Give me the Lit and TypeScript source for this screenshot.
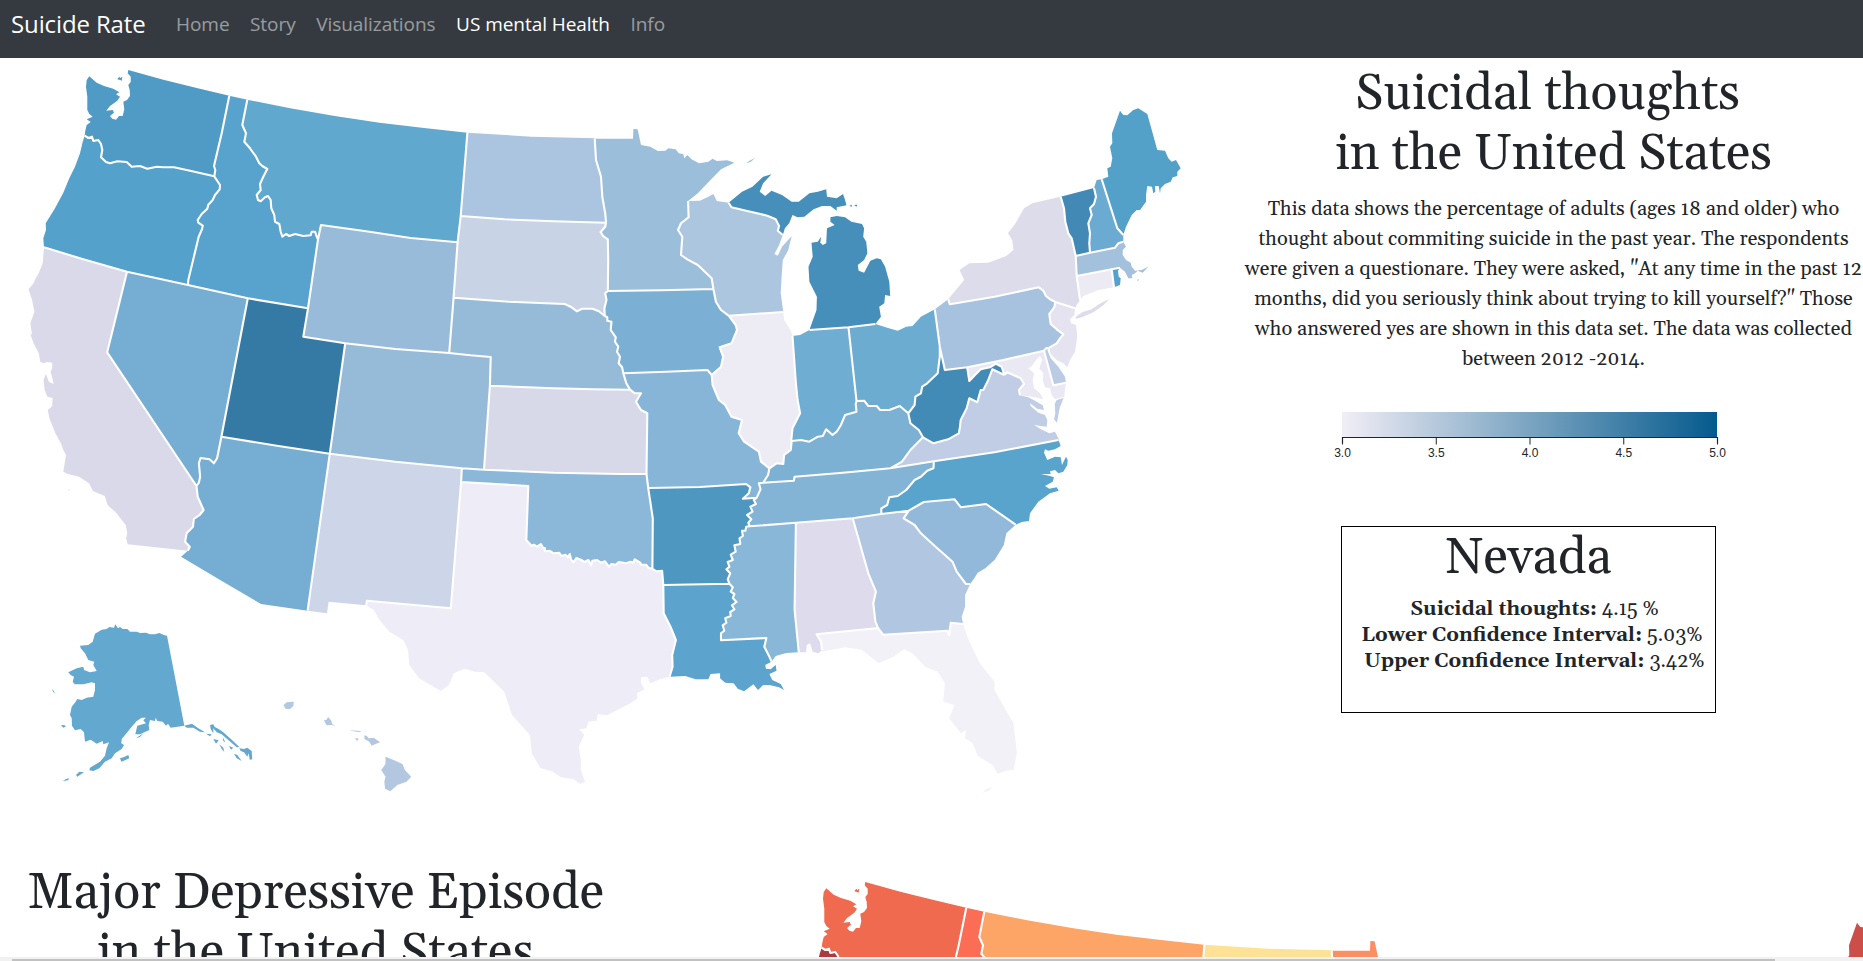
import { LitElement, html, css, svg } from "lit";
import { customElement, property } from "lit/decorators.js";

type Pt = [number, number];

// Survey sheets: each has an origin and a horizontal / vertical resolution.
const SHEETS: Record<string, [number, number, number, number]> = {
  A: [0, 0, 2.24, 3],
  B: [0, 300, 2.529, 3],
  C: [0, 600, 2.529, 3],
  D: [540, 100, 2.376, 3],
  E: [540, 400, 2.376, 3],
  K: [40, 615, 3, 3],
  M: [1040, 100, 3, 3],
  N: [960, 280, 3, 3],
  W: [30, 60, 3, 3],
};

function decode(src: string): Pt[] {
  let sheet = SHEETS.A;
  const out: Pt[] = [];
  for (const tok of src.trim().split(/\s+/)) {
    if (SHEETS[tok]) {
      sheet = SHEETS[tok];
      continue;
    }
    const [x, y] = tok.split(",").map(Number);
    out.push([sheet[0] + x / sheet[2], sheet[1] + y / sheet[3]]);
  }
  return out;
}

// Borders shared by two states.
const BORDERS: Record<string, string> = {
  waor: "W 164,227 175,234 186,230 190,243 205,240 213,252 217,270 213,292 228,306 240,310 262,304 290,306 305,320 330,318 352,326 380,320 400,322 432,322 470,330 553,349",
  waid: "W 598,107 575,220 552,318 556,330 553,349",
  orid: "W 553,349 570,375 569,388 555,405 548,420 535,434 532,446 515,462 503,480 505,488 518,497 516,508 506,530 475,660 A 421,855",
  orca: "W 42,562 160,598 291,635",
  ornv: "W 291,635 A 421,855",
  idnv: "A 421,855 555,895",
  idut: "A 555,895 690,925",
  idwy: "A 690,925 W 864,538",
  idmt: "W 652,119 637,195 648,220 643,245 660,265 678,290 688,310 697,318 712,327 700,350 690,372 692,390 680,405 684,420 692,424 705,412 714,408 722,420 724,445 733,465 735,485 748,492 752,515 757,530 768,522 778,528 795,522 820,528 842,526 845,515 855,515 860,530 864,538",
  mtwy: "W 864,538 873,495 A 820,694 920,714 1025,727",
  mtnd: "A 1047,398 1032,648",
  mtsd: "A 1032,648 1025,727",
  sdwy: "A 1025,727 1016,893",
  ndsd: "A 1032,648 1130,658 1240,664 1357,668",
  ndmn: "D 130,116 133,180 145,230 148,290 155,340 157,367",
  sdmn: "D 157,367 155,380 144,396 150,408 161,418 162,480 161,573",
  sdne: "A 1016,893 1140,905 1265,912 D 75,622 88,634 100,626 125,626 140,634 154,648",
  sdia: "D 161,573 155,580 158,600 153,625 154,648",
  neia: "D 154,648 160,652 160,662 170,665 168,690 180,712 178,725 186,740 183,755 190,770 187,790 195,802 198,820",
  nemo: "D 198,820 205,850 214,869",
  newy: "A 1016,893 B 1136,159",
  neco: "B 1136,159 1190,166 1241,171 1239,257",
  neks: "B 1239,257 1400,265 1500,268 D 214,869",
  wyut: "A 690,925 B 767,110 873,130",
  wyco: "B 873,130 1000,147 1136,159",
  utco: "B 873,130 834,461",
  nvut: "A 555,895 B 560,410",
  utaz: "B 560,410 700,437 834,461",
  nvca: "W 291,635 B 271,157 497,558",
  nvaz: "B 560,410 549,475 541,490 530,478 507,474 503,490 506,530 503,548 497,558",
  caaz: "B 497,558 500,590 515,630 505,645 490,657 488,680 472,700 468,725 480,740 475,752",
  aznm: "B 834,461 778,932",
  nmco: "B 834,461 1000,485 1168,505",
  coks: "B 1239,257 1224,509",
  cook: "B 1168,505 1224,509",
  nmok: "B 1168,505 1166,546",
  nmtx: "B 1166,546 1140,925 928,902 926,916",
  oktx: "B 1166,546 1336,558 1331,720 1345,738 1350,734 1358,740 1368,732 1374,745 1378,744 1378,754 1390,752 1400,760 1414,758 1420,768 1430,764 1436,772 1441,762 1444,778 1450,787 1458,774 1470,780 1478,786 1488,780 1495,796 1498,782 1510,780 1520,788 1530,784 1540,800 E 170,492 180,494 187,486 205,490 215,485 222,488 225,478 238,488 240,494 252,494 258,504 267,506",
  artx: "E 267,506 276,514 290,512 293,555",
  ksok: "B 1224,509 1400,518 1568,522 E 253,222",
  ksmo: "D 214,869 225,880 240,880 228,905 240,930 255,940 E 253,222",
  okmo: "E 253,222 257,264",
  okar: "E 257,264 268,355 267,506",
  moar: "E 257,264 380,261 490,252 500,262 496,280 482,296 515,293",
  motn: "E 515,293 524,268 520,250 530,248",
  moky: "E 530,248 542,225 545,205",
  moil: "E 545,205 525,185 520,155 485,125 472,100 480,60 455,50 440,15 D 425,900 410,855 408,825",
  moia: "D 198,820 300,815 398,810 408,825",
  iail: "D 408,825 430,800 435,770 427,742 455,730 468,690 465,675 448,647",
  iawi: "D 448,647 430,630 418,605 412,567",
  iamn: "D 161,573 290,571 412,567",
  mnwi: "D 412,567 408,535 375,495 350,478 335,465 338,410 328,390 335,370 353,352 352,303",
  wimi: "D 448,308 455,322 490,332 540,347 560,358 568,378 565,392 577,405",
  wiil: "D 448,647 578,636",
  ilin: "D 600,708 608,850 612,900 618,940 600,985 597,1020 E 598,123",
  ilky: "E 598,123 596,150 580,165 578,192 562,190 545,205",
  inky: "E 598,123 620,120 640,125 660,110 672,108 680,88 695,105 705,95 715,75 725,45 752,35 750,12 752,3",
  inoh: "D 733,682 752,903",
  inmi: "D 640,690 733,682",
  ohmi: "D 733,682 797,672",
  ohky: "D 752,903 770,902 780,918 800,918 808,930 830,930 855,918 875,940",
  ohwv: "D 875,940 890,915 892,890 905,880 908,860 920,850 945,820 950,770 950,740",
  ohpa: "D 938,628 950,740",
  pawv: "D 950,740 962,810 1015,802",
  pamd: "D 1015,802 N 130,240 252,212",
  pade: "N 252,212 258,205 268,203",
  panj: "N 268,203 290,190 300,175 310,163 290,148 272,132 268,102 283,82 286,66",
  nypa: "D 970,598 974,613 1080,590 1185,562 N 250,32 258,48 270,58 286,66",
  nynj: "N 286,66 345,85",
  nyvt: "M 62,290 72,325 76,365 85,400 95,415 107,468",
  nyma: "M 107,468 110,528",
  nyct: "M 110,528 120,600",
  mdde: "N 252,212 280,316 318,308",
  mdwv: "D 1015,802 N 28,303 45,285 62,268 90,262 108,251 125,260 133,285",
  mdva: "N 133,285 142,277 160,285 182,295 192,312 177,330 180,346",
  vawv: "N 133,285 97,268 85,300 70,330 62,330 52,367 28,355 20,385 2,420 0,440 E 995,100 970,118 935,130 910,112",
  kywv: "D 875,940 880,970 900,990 E 910,112",
  kyva: "E 910,112 880,150 860,185 832,205",
  kytn: "E 530,248 603,242 605,230 720,218 832,205",
  vatn: "E 832,205 936,184",
  vanc: "E 936,184 1080,157 1232,120",
  tnnc: "E 936,184 935,205 920,212 905,230 890,240 870,270 850,288 830,292 825,315 811,325 811,342",
  tnga: "E 743,355 811,342",
  tnal: "E 608,368 743,355",
  tnms: "E 498,379 608,368",
  artn: "E 515,293 508,300 513,312 500,320 505,335 492,345 502,358 495,368 498,379",
  arms: "E 498,379 490,380 488,392 480,392 482,408 474,415 476,432 462,436 465,455 453,464 458,480 446,486 450,500 443,508 452,520 446,538 450,551",
  arla: "E 293,555 450,551",
  lams: "E 450,551 458,562 453,575 462,582 458,594 467,606 456,616 462,628 452,636 453,648 440,655 443,668 434,676 438,692 430,700 430,721 538,714 533,740 545,770 550,785",
  msal: "E 608,368 605,630 615,757",
  latx: "E 293,555 294,640 310,680 323,720 314,765 315,800 308,830",
  alfl: "E 670,750 668,725 657,703 803,684",
  alga: "E 743,355 780,520 798,575 792,610 797,665 803,684",
  gafl: "E 803,684 815,704 968,692 972,705 976,668 1005,672",
  gasc: "E 876,332 864,355 890,375 905,400 940,440 980,485 990,515 1012,552 1022,552",
  ncga: "E 811,342 876,332",
  ncsc: "E 876,332 912,306 985,298 1000,322 1060,312 1130,374",
  vtnh: "M 162,264 168,290 162,312 150,325 155,345 145,370 150,400 148,430 150,458",
  vtma: "M 107,468 150,458",
  nhma: "M 150,458 225,443 235,430 250,425",
  nhme: "M 185,238 232,385 250,405",
  ctma: "M 110,528 215,508",
  mari: "M 215,508 240,503",
  ctri: "M 215,508 222,562",
};

// Coastlines and international borders, owned by a single state.
const EDGES: Record<string, string> = {
  waC: "W 598,107 500,84 400,59 295,30 293,40 302,50 302,66 295,75 299,90 300,108 291,120 280,125 283,148 278,168 267,168 258,179 247,176 240,168 252,158 248,150 229,152 240,138 262,122 270,110 258,103 268,97 250,86 222,78 200,68 178,49 170,60 168,80 172,110 172,150 178,162 188,170 170,178 182,186 170,195 166,212 164,227",
  orC: "W 164,227 158,245 150,280 135,320 118,355 100,398 75,445 47,490 48,510 40,535 42,562",
  idC: "W 598,107 652,119",
  mtC: "W 652,119 A 650,325 750,348 850,368 950,384 1047,398",
  ndC: "A 1047,398 1190,410 1332,415",
  caC: "W 42,562 40,590 38,610 30,630 18,658 A 85,820 75,850 64,868 72,900 77,935 68,970 72,1005 B 76,100 85,130 98,160 102,185 110,190 120,186 132,188 132,205 128,215 136,252 124,246 116,222 110,240 113,270 120,290 133,294 132,318 121,330 125,355 140,400 155,432 160,450 167,465 160,515 172,522 200,530 225,550 235,573 265,588 272,615 295,640 318,675 322,700 319,715 323,733 475,752",
  azC: "B 475,752 458,770 560,842 660,912 778,932",
  nmC: "B 778,932 827,940 831,905 926,916",
  mnC: "D 130,116 221,116 222,87 232,88 240,135 262,140 280,153 298,152 305,145 322,148 330,160 340,162 343,175 350,165 360,178 378,190 400,185 410,176 420,183 445,181 462,188 430,208 405,240 375,280 352,303",
  wiC: "D 352,303 380,302 400,290 412,282 420,303 448,308",
  wiD: "D 577,405 568,435 557,462 565,467 575,440 598,408 590,450 577,480 574,530 572,580 578,636",
  ilC: "D 578,636 580,660 595,690 600,708",
  inC: "D 600,708 618,705 640,690",
  ohC: "D 797,672 825,683 850,692 870,680 885,678 905,650 938,628",
  paC: "D 938,628 970,598",
  nyC: "D 970,598 1008,540 997,510 1020,490 1065,488 1108,468 1125,450 1122,420 1112,400 1130,370 1150,325 1170,310 1236,290",
  nyD: "M 120,600 112,612 N 345,85",
  njC: "N 345,85 343,105 330,118 333,130 348,135 352,170 345,215 330,240 322,262 310,250 290,240 272,222 268,203",
  deC: "N 268,203 262,210 272,235 295,260 315,290 318,308",
  mdC: "N 318,308 315,325 313,350 285,358 275,345 270,325 255,322 248,300 250,280 238,265 247,240 240,228 228,240 215,258 205,265 222,280 218,300 222,325 240,340 250,358 225,352 200,348 180,346",
  vaC: "N 180,346 205,352 225,362 248,376 252,390 232,386 210,370 212,378 235,398 255,405 262,420 260,440 240,438 222,434 240,446 268,460 285,455 298,480",
  ncC: "E 1232,120 N 302,498 285,508 265,512 255,508 252,518 262,540 285,530 302,532 306,555 318,530 323,540 322,555 310,575 295,580 285,570 270,574 272,582 243,582 270,588 282,592 278,605 255,618 268,626 290,622 296,632 270,640 235,665 210,700 207,723 E 1145,366 1130,374",
  scC: "E 1130,374 1108,400 1102,435 1090,460 1080,480 1058,505 1040,518 1032,535 1022,552",
  gaC: "E 1022,552 1010,585 1010,620 1002,650 1005,672",
  flC: "E 1005,672 1020,725 1045,790 1080,845 1080,870 1100,915 1125,970 1133,1060 1125,1110 1105,1112 1088,1122 1075,1095 1040,1068 1028,1030 1010,1015 1012,990 1000,1000 972,955 985,915 958,905 962,850 945,815 915,800 885,760 865,748 840,770 805,790 765,750 725,742 670,755",
  alC: "E 615,757 632,757 634,735 642,730 648,755 662,760 670,750",
  msC: "E 550,785 560,768 585,759 615,757",
  laC: "E 550,785 535,795 537,806 548,808 560,795 562,812 545,822 552,840 572,852 580,870 568,862 545,855 530,855 518,870 507,853 485,874 470,866 460,850 440,848 428,835 428,820 405,822 400,838 370,838 345,828 308,830",
  txC: "E 308,830 285,838 262,850 255,830 240,832 240,850 248,868 230,880 232,895 215,910 160,945 137,943 135,962 115,965 110,985 93,988 105,1005 92,1040 97,1080 97,1110 107,1145 95,1152 80,1138 50,1132 30,1115 0,1103 C 1362,495 1345,460 1340,405 1295,345 1275,275 1225,217 1200,215 1175,206 1148,220 1135,255 1115,273 1060,235 1035,195 1032,150 1020,120 985,95 960,60 945,30 926,16",
  vtC: "M 62,290 162,264",
  nhC: "M 162,264 170,240 185,238",
  nhD: "M 250,405 250,425",
  meC: "M 185,238 205,230 202,205 212,200 217,175 210,140 217,130 216,100 240,32 250,45 262,46 280,30 295,25 322,42 352,150 375,152 385,175 395,185 408,180 422,205 412,215 412,228 398,232 392,245 375,252 362,265 360,280 356,258 345,258 346,275 340,280 336,260 322,258 318,285 318,305 300,330 290,330 275,345 258,380 250,405",
  maC: "M 250,425 258,440 248,450 248,465 258,480 272,488 275,500 285,512 305,510 325,500 308,518 293,512 285,520 275,525 277,535 265,535 255,515 240,503",
  ctC: "M 120,600 130,588 175,570 222,562",
  riC: "M 240,503 234,512 236,530 242,535 240,555 222,562",
  miC: "D 797,672 810,650 806,620 818,610 820,585 832,588 830,545 820,500 810,478 800,475 785,482 770,518 757,512 755,495 770,480 778,460 775,425 768,410 770,385 765,372 740,365 725,352 705,348 690,352 690,365 700,375 682,385 680,430 672,435 666,428 668,410 660,425 645,428 648,470 638,500 640,545 658,590 657,630 640,690",
  upC: "D 577,405 582,385 592,370 600,345 612,352 628,350 650,328 670,318 690,318 705,332 705,322 728,316 725,300 720,282 705,295 682,290 680,268 660,275 640,280 615,305 598,305 575,285 550,272 535,288 522,275 530,250 550,223 530,230 505,260 480,275 448,308",
};

const STATES: Record<string, string> = {
  WA: "waC waor -waid", OR: "-waor orC orca ornv -orid",
  ID: "idC idmt -idwy -idut -idnv -orid -waid", MT: "mtC mtnd mtsd -mtwy -idmt",
  ND: "ndC ndmn -ndsd -mtnd", SD: "ndsd sdmn sdia -sdne -sdwy -mtsd",
  WY: "mtwy sdwy newy -wyco -wyut idwy", NV: "ornv idnv nvut nvaz -nvca",
  UT: "idut wyut utco -utaz -nvut", CA: "orca nvca caaz -caC",
  AZ: "utaz aznm -azC -caaz -nvaz", NM: "nmco nmok nmtx -nmC -aznm",
  CO: "wyco neco coks -cook -nmco -utco", NE: "sdne neia nemo -neks -neco -newy",
  KS: "neks ksmo -ksok -coks", OK: "cook ksok okmo okar -oktx -nmok",
  TX: "oktx artx latx txC -nmtx", MN: "mnC -mnwi -iamn -sdmn -ndmn",
  IA: "iamn -iawi -iail -moia -neia -sdia", MO: "moia -moil -moky -motn -moar -okmo -ksmo -nemo",
  AR: "moar artn arms -arla -artx -okar", LA: "arla lams laC -latx",
  WI: "wiC wimi wiD -wiil iawi mnwi", IL: "wiil ilC ilin ilky moil iail",
  IN: "inC inmi inoh -inky -ilin", MI: "ohmi miC inmi", UP: "wimi upC",
  OH: "ohmi ohC ohpa -ohwv -ohky -inoh", KY: "inky ohky kywv kyva -kytn moky -ilky",
  TN: "kytn vatn tnnc -tnga -tnal -tnms -artn motn", MS: "tnms msal -msC -lams -arms",
  AL: "tnal alga -alfl -alC -msal", GA: "tnga ncga gasc gaC -gafl -alga",
  FL: "gafl flC alfl", SC: "ncsc scC -gasc", NC: "vanc ncC -ncsc -ncga -tnnc",
  VA: "mdva vaC -vanc -vatn -kyva -vawv", WV: "pawv mdwv vawv -kywv -ohwv",
  PA: "paC nypa -panj -pade -pamd -pawv -ohpa", NY: "nyC nyvt nyma nyct nyD -nynj -nypa",
  NJ: "nynj njC panj", DE: "pade deC -mdde", MD: "pamd mdde mdC -mdva -mdwv",
  VT: "vtC vtnh -vtma -nyvt", NH: "nhC nhme nhD -nhma -vtnh", ME: "meC -nhme",
  MA: "vtma nhma maC -mari -ctma -nyma", CT: "ctma ctri -ctC -nyct", RI: "mari riC -ctri",
};

// Detached pieces.
const ISLANDS: [string, string][] = [
  ["WA", "W 262,58 270,60 275,62 277,50 271,54 268,50"],
  ["MN", "D 490,190 500,186 512,173 498,182"],
  ["UP", "D 735,318 742,320 740,314"],
  ["UP", "D 746,315 754,314 752,320"],
  ["NY", "N 346,117 350,108 368,96 395,88 418,72 448,56 430,76 400,97 365,112"],
  ["VA", "N 311,354 290,360 284,372 286,400 282,418 291,428 296,400 300,380"],
  ["MA", "M 290,540 297,537 295,543"],
  ["FL", "E 1052,1178 1060,1168 1075,1162 1066,1172"],
  ["CA", "B 172,568 178,570 175,572"],
  ["AK", "K 381,62 372,60 358,54 345,58 330,58 318,53 300,54 290,50 270,50 262,42 248,42 240,36 234,40 226,28 222,38 208,36 200,42 185,44 165,56 158,80 145,90 120,92 122,100 135,115 145,135 163,140 160,150 170,168 150,172 132,165 130,155 110,160 85,172 92,180 102,185 98,200 104,208 130,208 155,202 165,205 165,225 160,245 140,248 125,255 112,252 106,262 95,275 90,300 95,310 96,332 105,346 122,342 132,352 135,380 152,374 170,386 188,378 190,388 207,382 200,400 195,422 180,440 150,458 148,466 160,468 178,460 195,440 215,430 225,415 245,402 252,390 244,385 245,372 262,352 275,335 290,318 305,308 318,308 310,316 318,325 292,332 286,358 300,358 328,345 326,330 330,315 345,318 347,308 352,318 368,320 378,332 384,326 392,338 433,332"],
  ["AK", "K 433,332 456,326 475,340 495,352 480,350 460,338 440,338"],
  ["AK", "K 498,356 515,358 510,364"],
  ["AK", "K 510,330 520,328 524,336 536,342 550,352 575,374 598,396 590,397 565,375 545,358 530,352 520,340 520,355 512,342"],
  ["AK", "K 520,372 536,376 528,386"],
  ["AK", "K 538,388 550,398 553,411 545,402"],
  ["AK", "K 548,366 556,382 550,378"],
  ["AK", "K 567,393 580,398 573,404"],
  ["AK", "K 582,416 592,420 605,438 590,430"],
  ["AK", "K 598,400 612,402 622,398 635,408 637,433 629,434 626,415 622,425 612,412 602,408"],
  ["AK", "K 240,430 252,426 265,420 268,430 255,436 244,440"],
  ["AK", "K 108,480 118,470 132,472 124,477 112,485"],
  ["AK", "K 68,498 78,492 88,490 84,496"],
  ["AK", "K 63,331 72,330 78,334 70,338"],
  ["AK", "K 36,222 41,228 46,236 39,230"],
  ["AK", "K 288,370 310,355 300,366"],
  ["HI", "C 717,316 725,307 743,305 742,318 733,328 722,326"],
  ["HI", "C 819,361 825,360 830,351 838,362 840,372 849,378 838,375 826,376"],
  ["HI", "C 883,391 912,393 912,396 900,395"],
  ["HI", "C 898,415 905,415 907,419 902,422"],
  ["HI", "C 921,406 928,408 932,415 945,413 961,427 950,432 940,437 934,425 922,417"],
  ["HI", "C 975,470 1000,482 1018,492 1024,510 1040,530 1028,545 1005,555 987,574 974,566 972,545 975,530 964,510 975,492"],
];

const points: Record<string, Pt[]> = {};
for (const [k, v] of Object.entries({ ...BORDERS, ...EDGES })) points[k] = decode(v);

const toPath = (p: Pt[]) => "M" + p.map(([x, y]) => `${x.toFixed(1)} ${y.toFixed(1)}`).join("L");

function shape(id: string): string {
  // Each following line is attached by whichever end lies nearer to the pen.
  let ring: Pt[] = [];
  const names = STATES[id].split(" ").map((n) => n.replace("-", ""));
  const dist = (a: Pt, b: Pt) => Math.hypot(a[0] - b[0], a[1] - b[1]);
  names.forEach((n, i) => {
    let p = points[n];
    if (i === 0) {
      const next = points[names[1]];
      const near = (q: Pt) => Math.min(dist(q, next[0]), dist(q, next[next.length - 1]));
      if (near(p[0]) < near(p[p.length - 1])) p = [...p].reverse();
    } else {
      const pen = ring[ring.length - 1];
      if (dist(pen, p[p.length - 1]) < dist(pen, p[0])) p = [...p].reverse();
    }
    ring = ring.concat(p);
  });
  return toPath(ring) + "Z";
}

const SHAPES: [string, string][] = [
  ...Object.keys(STATES).map((id): [string, string] => [id, shape(id)]),
  ...ISLANDS.map(([id, s]): [string, string] => [id, toPath(decode(s)) + "Z"]),
];
const MESH = Object.keys(BORDERS).map((k) => toPath(points[k])).join("");

const THOUGHTS: Record<string, string> = {
  WA: "#509bc6", OR: "#54a2cb", ID: "#58a3cd", MT: "#60a8cd", ND: "#abc4e0", SD: "#c9d3e6",
  MN: "#9bbfdb", WY: "#99bbda", NV: "#75aed2", UT: "#357aa4", CA: "#d9d9ea", NE: "#95bbd9",
  CO: "#96bbd9", KS: "#d7d9e9", AZ: "#75aed2", NM: "#cdd5e8", OK: "#8bb7d8", TX: "#eeecf6",
  MO: "#86b5d7", IA: "#7bb0d4", WI: "#adc6e0", IL: "#edebf4", MI: "#468fba", UP: "#468fba",
  IN: "#70add2", OH: "#6dacd1", PA: "#a6c2df", NY: "#dcdcea", VT: "#428ab5", NH: "#6cabd1",
  ME: "#53a1c9", MA: "#a3c0dd", CT: "#eceaf3", RI: "#54a2cb", NJ: "#e4e3ef", DE: "#bbcbe4",
  MD: "#eae8f2", VA: "#c0cde5", WV: "#428bb6", KY: "#7cb1d4", TN: "#83b3d5", NC: "#59a4cc",
  SC: "#92b9d9", GA: "#b1c6e1", AL: "#dddbec", MS: "#89b7d7", LA: "#5ca3cd", AR: "#4d97c1",
  FL: "#f3f1f8", AK: "#63a8ce", HI: "#b3c8e0",
};

const EPISODES: Record<string, string> = {
  WA: "#f06a50", OR: "#a93c3e", ID: "#fb6d54", MT: "#fda566", ND: "#fde295", MN: "#f98f63",
  ME: "#cb4f48",
};

@customElement("us-map")
class UsMap extends LitElement {
  @property({ attribute: false }) colors: Record<string, string> = {};
  @property() view = "0 0 100 100";

  static styles = css`
    :host { display: block; }
    svg { display: block; width: 100%; height: 100%; }
    .mesh { fill: none; stroke: #fff; stroke-width: 2.1; stroke-linejoin: round; }
  `;

  render() {
    return html`<svg viewBox=${this.view}>
      ${SHAPES.filter(([id]) => this.colors[id]).map(([id, d]) => svg`<path d=${d} fill=${this.colors[id]}></path>`)}
      <path class="mesh" d=${MESH}></path>
    </svg>`;
  }
}

@customElement("app-root")
class AppRoot extends LitElement {
  static styles = css`
    :host {
      display: flex;
      flex-direction: column;
      height: 961px;
      overflow: hidden;
      background: #fff;
      color: #212529;
      font-family: Georgia, Gelasio, "Liberation Serif", serif;
    }
    nav {
      display: flex;
      align-items: flex-start;
      flex: none;
      height: 53px;
      padding: 5px 11px 0;
      background: #343a40;
      font-family: "Segoe UI", "Open Sans", sans-serif;
      white-space: nowrap;
    }
    .brand { width: 165px; font-size: 24px; line-height: 38px; letter-spacing: -0.12px; color: #fff; }
    .links { display: flex; gap: 20.5px; margin-top: 4px; font-size: 19px; line-height: 30px; letter-spacing: -0.05px; color: rgba(255, 255, 255, 0.5); }
    .active { color: #fff; }
    .page { flex: 1; min-height: 0; overflow: hidden; }
    .thoughts { display: grid; grid-template-columns: 1244px 619px; height: 804px; }
    .map { width: 1240px; height: 754px; }
    .info { display: flex; flex-direction: column; align-items: center; padding-top: 7px; }
    h1 {
      margin: 0;
      font-size: 50px;
      font-weight: 400;
      line-height: 60px;
      text-align: center;
      white-space: pre;
    }
    .lead { margin: 9px 0 0; font-size: 20px; line-height: 30px; text-align: center; white-space: nowrap; }
    .legend { display: block; width: 420px; height: 60px; margin: 31px 49px 0 0; font: 12px "Liberation Sans", sans-serif; }
    .card {
      box-sizing: border-box;
      width: 375px;
      height: 187px;
      margin: 61px 50px 0 0;
      padding-top: 2px;
      border: 1px solid #000;
      text-align: center;
      white-space: nowrap;
    }
    .card h1 { height: 67px; }
    .row { padding-left: 12px; font-size: 20px; line-height: 26px; }
    .lower { padding-left: 7px; }
    .episodes { display: flex; }
    .episodes h1 { width: 631px; padding: 2px 106px 0 0; }
    .map2 { width: 1126px; height: 95px; }
    .scroll { flex: none; height: 2px; padding: 2px 88px 0 12px; background: #f1f1f1; }
    .thumb { height: 2px; background: #c1c1c1; }
  `;

  render() {
    const ticks = ["3.0", "3.5", "4.0", "4.5", "5.0"];
    return html`
      <nav>
        <span class="brand">Suicide Rate</span>
        <div class="links">
          <span>Home</span><span>Story</span><span>Visualizations</span>
          <span class="active">US mental Health</span><span>Info</span>
        </div>
      </nav>
      <div class="page">
        <section class="thoughts">
          <us-map class="map" view="0 58 1240 754" .colors=${THOUGHTS}></us-map>
          <div class="info">
            <h1>${"Suicidal thoughts\u00a0\nin the United States"}</h1>
            <p class="lead">
              This data shows the percentage of adults (ages 18 and older) who<br />
              thought about commiting suicide in the past year. The respondents<br />
              were given a questionare. They were asked, "At any time in the past 12<br />
              months, did you seriously think about trying to kill yourself?" Those<br />
              who answered yes are shown in this data set. The data was collected<br />
              between 2012 -2014.
            </p>
            <svg class="legend" viewBox="0 0 420 60">
              <defs>
                <linearGradient id="ramp">
                  <stop offset="0" stop-color="#f1eef6"></stop>
                  <stop offset="1" stop-color="#045a8d"></stop>
                </linearGradient>
              </defs>
              <rect x="23" y="7" width="375" height="25" fill="url(#ramp)"></rect>
              <path d="M23.5 38.500V32.500H398.500V38.500" fill="none" stroke="#212529" stroke-width="1.2"></path>
              ${ticks.map((t, i) => {
                const x = 23.5 + i * 93.75;
                return svg`<path d="M${x} 32.500v7" stroke="#212529"></path>
                  <text x=${x} y="52" text-anchor="middle" fill="#212529">${t}</text>`;
              })}
            </svg>
            <div class="card">
              <h1>Nevada</h1>
              <div class="row"><b>Suicidal thoughts:</b> 4.15 %</div>
              <div class="row lower"><b>Lower Confidence Interval:</b> 5.03%</div>
              <div class="row"><b>Upper Confidence Interval:</b> 3.42%</div>
            </div>
          </div>
        </section>
        <section class="episodes">
          <h1>${"Major Depressive Episode\nin the United States"}</h1>
          <us-map class="map2" view="0 50 1126 95" .colors=${EPISODES}></us-map>
        </section>
      </div>
      <div class="scroll"><div class="thumb"></div></div>
    `;
  }
}
